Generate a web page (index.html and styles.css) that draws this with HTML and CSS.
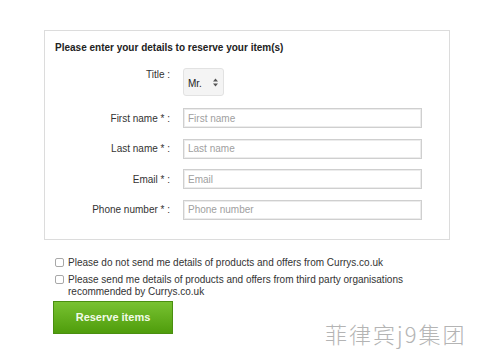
FILE: index.html
```html
<!DOCTYPE html>
<html>
<head>
<meta charset="utf-8">
<link rel="stylesheet" href="styles.css">
</head>
<body>
<div class="page">
  <div class="box">
    <h2 class="heading">Please enter your details to reserve your item(s)</h2>
    <div class="rows">
      <div class="row row-title">
        <label class="label label-title">Title :</label>
        <div class="select"><span>Mr.</span>
          <svg class="arrows" width="5" height="9" viewBox="0 0 5 9"><path d="M0 3.6 L2.5 0.5 L5 3.6 Z M0 5.4 L2.5 8.5 L5 5.4 Z" fill="#555"/></svg>
        </div>
      </div>
      <div class="row">
        <label class="label">First name * :</label>
        <input class="input" placeholder="First name">
      </div>
      <div class="row">
        <label class="label">Last name * :</label>
        <input class="input" placeholder="Last name">
      </div>
      <div class="row">
        <label class="label">Email * :</label>
        <input class="input" placeholder="Email">
      </div>
      <div class="row">
        <label class="label">Phone number * :</label>
        <input class="input" placeholder="Phone number">
      </div>
    </div>
  </div>
  <div class="checks">
    <div class="check"><span class="cb"></span><span>Please do not send me details of products and offers from Currys.co.uk</span></div>
    <div class="check"><span class="cb"></span><span>Please send me details of products and offers from third party organisations recommended by Currys.co.uk</span></div>
  </div>
  <button class="btn">Reserve items</button>
</div>
<div class="watermark">菲律宾j9集团</div>
</body>
</html>
```

FILE: styles.css
```css
html, body {
  margin: 0;
  padding: 0;
  background: #fff;
}
body {
  font-family: "Liberation Sans", Arial, sans-serif;
  color: #333;
  width: 479px;
  height: 351px;
  overflow: hidden;
  position: relative;
}
.page {
  padding: 30px 0 0 44px;
}
.box {
  box-sizing: border-box;
  width: 406px;
  height: 210px;
  border: 1px solid #dcdcdc;
  padding: 10px 10px 0 10px;
}
.heading {
  margin: 0;
  font-size: 10px;
  font-weight: bold;
  color: #222;
  line-height: 13px;
}
.rows {
  display: flex;
  flex-direction: column;
  margin-top: 14px;
}
.row {
  display: flex;
  align-items: center;
  height: 20px;
  margin-bottom: 10.5px;
}
.row-title {
  height: 28px;
  align-items: flex-start;
  margin-bottom: 12px;
}
.label {
  width: 115px;
  margin-right: 13px;
  text-align: right;
  font-size: 10px;
  color: #333;
}
.label-title {
  padding-top: 1px;
}
.select {
  box-sizing: border-box;
  width: 41px;
  height: 28px;
  border: 1px solid #e2e2e2;
  border-radius: 3px;
  background: #f4f4f4;
  display: flex;
  align-items: center;
  justify-content: space-between;
  padding: 2px 5px 0 4px;
  font-size: 10px;
  color: #222;
}
.arrows {
  margin-top: -2px;
}
.input {
  box-sizing: border-box;
  width: 239px;
  height: 20px;
  border: 1px solid #cfcfcf;
  box-shadow: inset 0 0 0 1px #ececec;
  padding: 0 4px;
  font-family: "Liberation Sans", Arial, sans-serif;
  font-size: 10px;
  outline: none;
  margin: 0;
}
.input::placeholder {
  color: #a0a0a0;
}
.checks {
  margin: 17px 0 0 11px;
  display: flex;
  flex-direction: column;
  gap: 5px;
}
.check {
  display: flex;
  align-items: flex-start;
  font-size: 10px;
  line-height: 12px;
  color: #333;
  width: 350px;
}
.cb {
  flex: none;
  box-sizing: border-box;
  width: 9px;
  height: 9px;
  border: 1px solid #a8a8a8;
  border-radius: 2px;
  margin: 1px 4px 0 0;
  background: #fff;
}
.btn {
  display: block;
  margin: 3px 0 0 9px;
  width: 120px;
  height: 33px;
  border: 1px solid #4a8f10;
  background: linear-gradient(#78c231, #4f9d0c);
  color: #f2fbe8;
  font-family: "Liberation Sans", Arial, sans-serif;
  font-weight: bold;
  font-size: 11px;
  padding: 0 0 2px 0;
}
.watermark {
  position: absolute;
  left: 325px;
  top: 317px;
  font-family: "Noto Sans CJK SC", sans-serif;
  font-weight: 300;
  font-size: 22px;
  letter-spacing: 2px;
  color: #b4b4b4;
  white-space: nowrap;
}
```
